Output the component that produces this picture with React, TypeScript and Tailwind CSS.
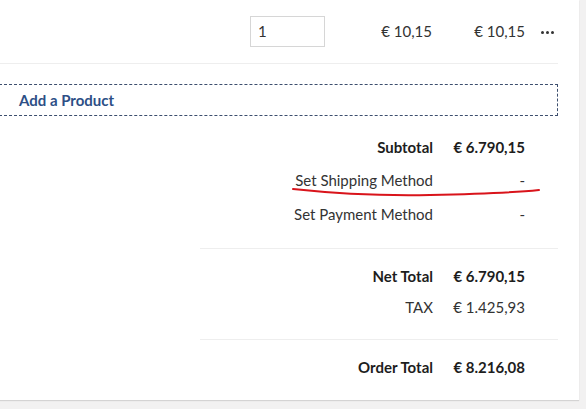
import React from "react";

type Line = { label: string; value: string; bold?: boolean; mark?: boolean };

const top: Line[] = [
  { label: "Subtotal", value: "€ 6.790,15", bold: true },
  { label: "Set Shipping Method", value: "-", mark: true },
  { label: "Set Payment Method", value: "-" },
];

const taxes: Line[] = [
  { label: "Net Total", value: "€ 6.790,15", bold: true },
  { label: "TAX", value: "€ 1.425,93" },
];

function Row({ line, h }: { line: Line; h: string }) {
  return (
    <div className={`relative flex items-center ${h}`}>
      <div className={`flex-1 text-right ${line.bold ? "font-bold text-[#1d1d1d]" : "text-[#333]"}`}>{line.label}</div>
      <div className={`w-[72px] ml-[20px] text-right ${line.bold ? "font-bold text-[#1d1d1d]" : "text-[#333]"}`}>{line.value}</div>
      <div className="w-[33px]" />
    </div>
  );
}

export default function App() {
  return (
    <div className="w-[586px] h-[409px] bg-[#f2f1f1] text-[15px] text-[#333]" style={{ fontFamily: "Lato, 'Open Sans', sans-serif" }}>
      <div className="relative w-[579px] h-[400px] bg-white shadow-[0_1px_1px_rgba(0,0,0,0.12)]">
        {/* item row */}
        <div className="flex items-center h-[64px] w-[558px] border-b border-[#eeeeee] pl-[250px]">
          <div className="w-[75px] h-[31px] border border-[#d6d6d6] flex items-center pl-[7px]">1</div>
          <div className="w-[107px] text-right">€ 10,15</div>
          <div className="w-[93px] text-right">€ 10,15</div>
          <div className="ml-[16px] flex gap-[2px] items-center pt-[1px]">
            <span className="w-[3px] h-[3px] rounded-full bg-[#333]" />
            <span className="w-[3px] h-[3px] rounded-full bg-[#333]" />
            <span className="w-[3px] h-[3px] rounded-full bg-[#333]" />
          </div>
        </div>

        {/* add product */}
        <div className="mt-[20px] -ml-px w-[559px] h-[32px] border border-dashed border-[#3d4f6e] flex items-center pl-[19px]">
          <span className="font-bold text-[#2d4f86]">Add a Product</span>
        </div>

        {/* totals */}
        <div className="ml-[200px] w-[358px]">
          <div className="pt-[14px] pb-[17px] border-b border-[#eeeeee]">
            {top.map((l) => (
              <Row key={l.label} line={l} h="h-[33.5px]" />
            ))}
          </div>
          <div className="pt-[12px] pb-[16px] border-b border-[#eeeeee]">
            {taxes.map((l) => (
              <Row key={l.label} line={l} h="h-[31px]" />
            ))}
          </div>
          <div className="pt-[12px]">
            <Row line={{ label: "Order Total", value: "€ 8.216,08", bold: true }} h="h-[31px]" />
          </div>
        </div>

        {/* hand-drawn red mark */}
        <svg className="absolute left-0 top-0 pointer-events-none" width="579" height="400">
          <path d="M293 189 C 330 193, 380 196, 430 195 S 520 192, 539 190" fill="none" stroke="#d9141b" strokeWidth="2" strokeLinecap="round" />
        </svg>
      </div>
    </div>
  );
}
